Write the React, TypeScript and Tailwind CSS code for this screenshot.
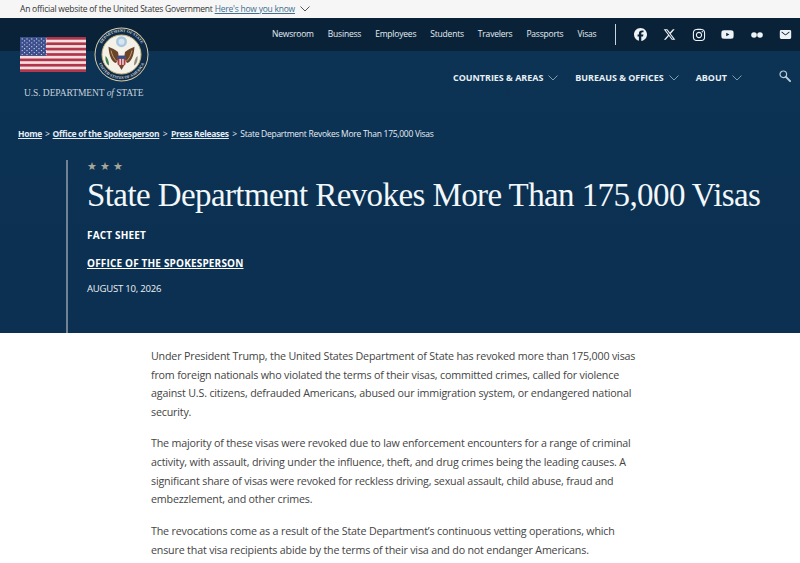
import React from 'react';
import { FaFacebook, FaInstagram, FaXTwitter, FaYoutube } from 'react-icons/fa6';
import { IoMail } from 'react-icons/io5';

const utilityLinks = ['Newsroom', 'Business', 'Employees', 'Students', 'Travelers', 'Passports', 'Visas'];
const mainLinks = ['COUNTRIES & AREAS', 'BUREAUS & OFFICES', 'ABOUT'];

function Flag() {
  const stripes = [0, 1, 2, 3, 4, 5, 6];
  const dots: [number, number][] = [];
  for (let row = 0; row < 9; row++) {
    const count = row % 2 === 0 ? 6 : 5;
    for (let col = 0; col < count; col++) {
      dots.push([(row % 2 === 0 ? 2.2 : 4.6) + col * 4.8, 1.9 + row * 1.95]);
    }
  }
  return (
    <svg width="66" height="35" viewBox="0 0 66 35" className="block">
      <rect width="66" height="35" fill="#f3dfe0" />
      {stripes.map((i) => (
        <rect key={i} y={i * 5.38} width="66" height="2.69" fill="#b0354a" />
      ))}
      <rect width="26" height="18.8" fill="#3c4f8c" />
      {dots.map(([x, y], i) => (
        <circle key={i} cx={x} cy={y} r="0.6" fill="#dfe4f2" />
      ))}
    </svg>
  );
}

function Seal() {
  return (
    <svg width="55" height="55" viewBox="0 0 55 55" className="block">
      <defs>
        <path id="sealTop" d="M5 27.500a22.500 22.500 0 0 1 45 0" />
        <path id="sealBottom" d="M3 27.500a24.500 24.500 0 0 0 49 0" />
      </defs>
      <circle cx="27.500" cy="27.500" r="27" fill="#d8cfa6" />
      <circle cx="27.500" cy="27.500" r="26" fill="#0e2b4a" />
      <circle cx="27.500" cy="27.500" r="19.500" fill="#f4f1e8" stroke="#c9b878" strokeWidth="1" />
      <text fontSize="4" fill="#d5d8d6" fontFamily="'Liberation Serif', serif" fontWeight="700">
        <textPath href="#sealTop" startOffset="50%" textAnchor="middle">DEPARTMENT OF STATE</textPath>
      </text>
      <text fontSize="4" fill="#d5d8d6" fontFamily="'Liberation Serif', serif" fontWeight="700">
        <textPath href="#sealBottom" startOffset="50%" textAnchor="middle">UNITED STATES OF AMERICA</textPath>
      </text>
      <circle cx="27.500" cy="14.700" r="5.500" fill="#a9c8e0" />
      <circle cx="27.500" cy="14.700" r="3" fill="#d6e5ef" />
      <path d="M14.500 19.700C17 21 21 22 24 25L25 31L22 36C18 35 15 29 14.500 19.700Z" fill="#6a4428" />
      <path d="M40.500 19.700C38 21 34 22 31 25L30 31L33 36C37 35 40 29 40.500 19.700Z" fill="#6a4428" />
      <path d="M17 23.500C18 28 20 32 22.500 34M38 23.500C37 28 35 32 32.500 34" stroke="#c9a877" strokeWidth="0.900" fill="none" />
      <path d="M24 37l3.500 6 3.500-6z" fill="#6a4428" />
      <ellipse cx="27.500" cy="23.500" rx="2.400" ry="2.800" fill="#f6f3ea" />
      <rect x="23.500" y="28.700" width="8" height="9.500" rx="1.500" fill="#b43c48" />
      <rect x="23.500" y="28.700" width="8" height="3.200" fill="#34508c" />
      <rect x="25.500" y="31.900" width="1.300" height="6" fill="#f4f1e8" />
      <rect x="28.300" y="31.900" width="1.300" height="6" fill="#f4f1e8" />
      <path d="M11.500 29c2 1.500 3.500 5 3.500 9.500c-2.500-1-4-5-3.500-9.500z" fill="#3d7d48" />
      <path d="M43.500 29c-2 1.500-3.500 5-3.500 9.500c2.500-1 4-5 3.500-9.500z" fill="#8f8e7c" />
    </svg>
  );
}

function FlickrDots() {
  return (
    <svg width="12" height="6" viewBox="0 0 12 6" className="block">
      <circle cx="3" cy="3" r="2.800" fill="currentColor" />
      <circle cx="9" cy="3" r="2.800" fill="currentColor" />
    </svg>
  );
}

function Chevron({ className }: { className: string }) {
  return (
    <svg width="10" height="6" viewBox="0 0 10 6" fill="none" className={className}>
      <path d="M0.500 0.500L5 5L9.500 0.500" stroke="currentColor" strokeWidth="1" />
    </svg>
  );
}

function SearchIcon() {
  return (
    <svg width="12" height="12" viewBox="0 0 12 12" fill="none" className="block">
      <circle cx="4.300" cy="4.300" r="3.300" stroke="#b9cbd8" strokeWidth="1.200" />
      <path d="M6.900 6.900l4.200 4.200" stroke="#b9cbd8" strokeWidth="2" strokeLinecap="round" />
    </svg>
  );
}

export default function App() {
  return (
    <div className="w-[800px] h-[563px] overflow-hidden bg-white font-['Open_Sans',sans-serif]">
      <div className="h-[18px] bg-[#f6f6f6] flex items-center pl-5 text-[8.500px] tracking-[-0.230px] text-[#333]">
        <span>An official website of the United States Government</span>
        <span className="ml-[2px] underline text-[#3f6f8f]">Here's how you know</span>
        <Chevron className="ml-[5px] text-[#555]" />
      </div>

      <header className="h-[315px] bg-[linear-gradient(to_bottom,#0a2238_0,#0a2238_33px,#0c3254_33px,#0b3051_100%)] text-white">
        <div className="flex h-[97px]">
          <div className="w-[252px] shrink-0 pl-5 pt-[9px]">
            <div className="flex items-center gap-[8px]">
              <Flag />
              <Seal />
            </div>
            <div className="mt-[4px] pl-1 font-['Liberation_Serif',serif] text-[9.500px] tracking-[-0.080px] text-[#c5d3de] whitespace-nowrap">
              U.S. DEPARTMENT <i>of</i> STATE
            </div>
          </div>

          <div className="flex-1 min-w-0">
            <div className="h-[33px] flex items-center pl-5">
              <nav className="flex gap-[14px] text-[8.500px] tracking-[-0.200px] text-[#e4edf3]">
                {utilityLinks.map((link) => (
                  <span key={link}>{link}</span>
                ))}
              </nav>
              <div className="w-px h-[21px] bg-[#c8d4dc] ml-[19px] shrink-0" />
              <div className="flex items-center ml-[10px] text-[#eef3f6]">
                <div className="w-[29px] flex justify-center"><FaFacebook size={13} /></div>
                <div className="w-[29px] flex justify-center"><FaXTwitter size={13} /></div>
                <div className="w-[29px] flex justify-center"><FaInstagram size={14} /></div>
                <div className="w-[29px] flex justify-center"><FaYoutube size={13} /></div>
                <div className="w-[29px] flex justify-center"><FlickrDots /></div>
                <div className="w-[29px] flex justify-center"><IoMail size={13} /></div>
              </div>
            </div>
            <div className="flex items-center mt-[20px] pl-[201px] h-[14px]">
              {mainLinks.map((link) => (
                <div key={link} className="flex items-center mr-[17px]">
                  <span className="text-[8.950px] font-bold text-[#e8f0f5] whitespace-nowrap">{link}</span>
                  <Chevron className="ml-[5px] mt-[1px] text-[#7f9db3]" />
                </div>
              ))}
              <div className="ml-[20px] -mt-[4px]"><SearchIcon /></div>
            </div>
          </div>
        </div>

        <div className="pl-[18px] mt-[12px] h-[14px] flex items-center text-[8.500px] tracking-[-0.280px] text-[#e4edf3] whitespace-nowrap">
          <span className="font-bold underline">Home</span>
          <span className="mx-[3px]">&gt;</span>
          <span className="font-bold underline">Office of the Spokesperson</span>
          <span className="mx-[3.500px]">&gt;</span>
          <span className="font-bold underline">Press Releases</span>
          <span className="mx-[3.500px]">&gt;</span>
          <span>State Department Revokes More Than 175,000 Visas</span>
        </div>

        <div className="ml-[66px] mt-[19px] h-[173px] border-l-[2px] border-[#6f8394] pl-[19px]">
          <div className="text-[11px] leading-[12px] tracking-[2.800px] text-[#a8a795]">★★★</div>
          <h1 className="mt-[2px] font-['Liberation_Serif',serif] text-[33px] leading-[42px] tracking-[-0.590px] font-normal text-[#f2f7fa] whitespace-nowrap">
            State Department Revokes More Than 175,000 Visas
          </h1>
          <div className="mt-[13px] text-[10px] leading-[13px] font-bold tracking-[0.170px]">FACT SHEET</div>
          <div className="mt-[15px] text-[10px] leading-[13px] font-bold tracking-[0.170px] underline">OFFICE OF THE SPOKESPERSON</div>
          <div className="mt-[12px] text-[9.500px] leading-[13px] tracking-[-0.200px] text-[#eef3f6]">AUGUST 10, 2026</div>
        </div>
      </header>

      <main className="ml-[151px] w-[490px] pt-[14px] text-[10.700px] leading-[18.670px] tracking-[-0.175px] text-[#444]">
        <p>
          Under President Trump, the United States Department of State has revoked more than 175,000 visas from foreign nationals who violated the terms of their visas, committed crimes, called for violence against U.S. citizens, defrauded Americans, abused our immigration system, or endangered national security.
        </p>
        <p className="mt-[12.500px]">
          The majority of these visas were revoked due to law enforcement encounters for a range of criminal activity, with assault, driving under the influence, theft, and drug crimes being the leading causes. A significant share of visas were revoked for reckless driving, sexual assault, child abuse, fraud and embezzlement, and other crimes.
        </p>
        <p className="mt-[13px]">
          The revocations come as a result of the State Department’s continuous vetting operations, which ensure that visa recipients abide by the terms of their visa and do not endanger Americans.
        </p>
      </main>
    </div>
  );
}
